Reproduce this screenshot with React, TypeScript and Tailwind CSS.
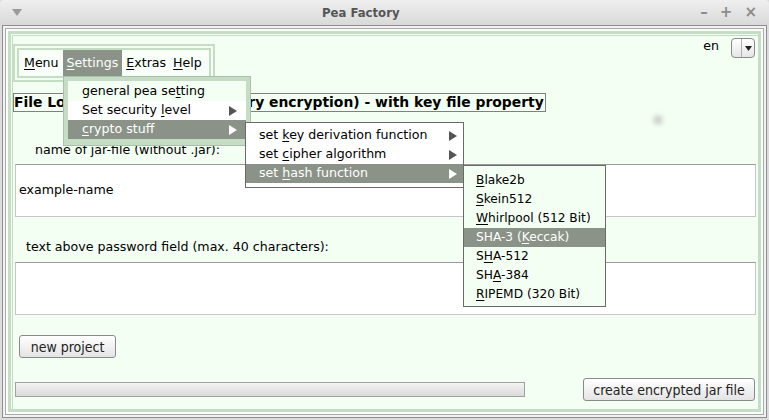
import React from "react";

const GREEN = "border-[#c5dcc5]";

function Mn({ children }: { children: React.ReactNode }) {
  return <span className="underline underline-offset-[2px] decoration-1">{children}</span>;
}

function Arrow({ white }: { white?: boolean }) {
  return (
    <svg width="8" height="10" viewBox="0 0 8 10" className="shrink-0">
      <polygon points="0,0 8,5 0,10" fill={white ? "#ffffff" : "#555555"} />
    </svg>
  );
}

function MenuRow({
  children,
  active,
  arrow,
  className = "",
}: {
  children: React.ReactNode;
  active?: boolean;
  arrow?: boolean;
  className?: string;
}) {
  return (
    <div
      className={`flex items-center justify-between h-[19px] ${
        active ? "bg-[#8b9388] text-white" : "text-black"
      } ${className}`}
    >
      <span>{children}</span>
      {arrow && <Arrow white={active} />}
    </div>
  );
}

export default function App() {
  return (
    <div className="relative w-[769px] h-[420px] bg-[#dcdcdc] flex flex-col font-['DejaVu_Sans',sans-serif] text-[12.6px] text-black overflow-hidden">
      {/* title bar */}
      <div className="h-[25px] shrink-0 flex items-center px-[12px] bg-gradient-to-b from-[#efefef] to-[#d9d9d9] rounded-t-[4px]">
        <svg width="10" height="7" viewBox="0 0 10 7">
          <polygon points="0,0 10,0 5,7" fill="#9a9a9a" />
        </svg>
        <span className="font-['DejaVu_Sans_Condensed','DejaVu_Sans',sans-serif] font-bold text-[13px] text-[#555] ml-[300px]">
          Pea Factory
        </span>
        <div className="ml-auto flex items-center gap-[12px] text-[#8c8c8c] font-bold text-[15px] leading-none">
          <span>–</span>
          <span>+</span>
          <span>×</span>
        </div>
      </div>

      {/* window frame */}
      <div className="flex-1 flex flex-col px-[2px] pb-[2px]">
        <div className="flex-1 flex flex-col border border-[#8e8e8e]">
          <div className="flex-1 flex flex-col p-[2px] bg-[#f2f2f2]">
            <div className="flex-1 flex flex-col border border-[#a9a9a9]">
              <div className="flex-1 flex flex-col p-[2px] bg-[#fafffa]">
                <div className={`flex-1 flex flex-col border-[3px] ${GREEN} bg-[#f3fff3]`}>
                  <div className={`flex-1 flex flex-col border-l border-t ${GREEN} ml-[1px] mt-[1px]`}>
                    {/* top row */}
                    <div className="shrink-0 flex justify-between items-start">
                      <div className="flex flex-col items-start">
                        <div className={`mt-[8px] border-2 ${GREEN} p-[2px] w-[202px]`}>
                          <div className={`border-2 ${GREEN} bg-[#f8fff8] flex h-[30px] pl-[1px]`}>
                            <div className="px-[4px] flex items-center">
                              <span><Mn>M</Mn>enu</span>
                            </div>
                            <div className="px-[4px] flex items-center bg-[#8b9388] text-white">
                              <span><Mn>S</Mn>ettings</span>
                            </div>
                            <div className="px-[4px] flex items-center">
                              <span><Mn>E</Mn>xtras</span>
                            </div>
                            <div className="px-[3px] flex items-center">
                              <span><Mn>H</Mn>elp</span>
                            </div>
                          </div>
                        </div>
                        <div className="mt-[11px] border border-[#808080] h-[19px] w-[533px] flex items-center font-bold text-[13.9px] whitespace-nowrap overflow-hidden">
                          File Lock PEA (file and directory encryption) - with key file property
                        </div>
                      </div>
                      <div className="flex items-center mt-[2px] mr-[3px]">
                        <span className="mr-[12px] -mt-[4px]">en</span>
                        <div className="w-[24px] h-[20px] rounded-[4px] border border-[#8a8a8a] bg-gradient-to-b from-white to-[#e6e6e6] flex">
                          <div className="w-[10px] border-r border-[#b0b0b0]" />
                          <div className="flex-1 flex items-center justify-center">
                            <svg width="7" height="5" viewBox="0 0 7 5">
                              <polygon points="0,0 7,0 3.5,5" fill="#222" />
                            </svg>
                          </div>
                        </div>
                      </div>
                    </div>

                    {/* name label + field */}
                    <div className="shrink-0 mt-[30px] ml-[22px] h-[15px] leading-[15px]">name of jar-file (without .jar):</div>
                    <div className="shrink-0 mt-[7px] mx-[2px] h-[53px] bg-white border border-[#c6c6c6] border-t-[#9a9a9a] flex items-center px-[3px]">
                      example-name
                    </div>

                    {/* password text label + field */}
                    <div className="shrink-0 mt-[22px] ml-[13px] h-[15px] leading-[15px]">
                      text above password field (max. 40 characters):
                    </div>
                    <div className="shrink-0 mt-[8px] mx-[2px] h-[53px] bg-white border border-[#c6c6c6] border-t-[#9a9a9a]" />

                    <div className="shrink-0 mt-[20px] ml-[6px] flex">
                      <button className="w-[97px] h-[23px] rounded-[3px] border border-[#8a8a8a] bg-gradient-to-b from-white to-[#e4e4e4] font-['DejaVu_Sans_Condensed','DejaVu_Sans',sans-serif] text-[14px] text-[#222] leading-none">
                        new project
                      </button>
                    </div>

                    <div className="shrink-0 mt-[20px] flex items-center justify-between">
                      <div className="ml-[2px] w-[510px] h-[15px] border border-[#a0a0a0] bg-gradient-to-b from-[#f4f4f4] to-[#dadada]" />
                      <button className="mr-[3px] w-[172px] h-[23px] rounded-[3px] border border-[#8a8a8a] bg-gradient-to-b from-white to-[#e4e4e4] font-['DejaVu_Sans_Condensed','DejaVu_Sans',sans-serif] text-[14px] text-[#222] leading-none">
                        create encrypted jar file
                      </button>
                    </div>
                  </div>
                </div>
              </div>
            </div>
          </div>
        </div>
      </div>

      {/* faint cursor blob */}
      <div className="absolute left-[653px] top-[115px] w-[10px] h-[10px] rounded-full bg-[#cfd4cf] blur-[2px]" />

      {/* Settings dropdown */}
      <div className="absolute left-[63px] top-[76px] w-[188px] border border-[#aac0aa]">
        <div className={`border-[4px] border-b-[6px] ${GREEN}`}>
          <MenuRow className="h-[20px] bg-[#f3fff3] pl-[14px] pr-[9px]">
            general pea se<Mn>t</Mn>ting
          </MenuRow>
          <MenuRow arrow className="bg-white pl-[14px] pr-[9px]">
            Set security <Mn>l</Mn>evel
          </MenuRow>
          <MenuRow arrow active className="pl-[14px] pr-[9px]">
            <Mn>c</Mn>rypto stuff
          </MenuRow>
        </div>
      </div>

      {/* crypto submenu */}
      <div className="absolute left-[245px] top-[122px] w-[219px] border border-[#6a6a6a] bg-white pt-[3px] pb-[4px]">
        <MenuRow arrow className="pl-[13px] pr-[6px]">
          set <Mn>k</Mn>ey derivation function
        </MenuRow>
        <MenuRow arrow className="pl-[13px] pr-[6px]">
          set <Mn>c</Mn>ipher algorithm
        </MenuRow>
        <MenuRow arrow active className="pl-[13px] pr-[6px]">
          set <Mn>h</Mn>ash function
        </MenuRow>
      </div>

      {/* hash submenu */}
      <div className="absolute left-[463px] top-[165px] w-[143px] border border-[#6a6a6a] bg-[#f3fff3] pt-[5px] pb-[2px] text-[12.2px]">
        <MenuRow className="pl-[12px]"><Mn>B</Mn>lake2b</MenuRow>
        <MenuRow className="pl-[12px]"><Mn>S</Mn>kein512</MenuRow>
        <MenuRow className="pl-[12px]"><Mn>W</Mn>hirlpool (512 Bit)</MenuRow>
        <MenuRow active className="pl-[12px]">SHA-3 (<Mn>K</Mn>eccak)</MenuRow>
        <MenuRow className="pl-[12px]">S<Mn>H</Mn>A-512</MenuRow>
        <MenuRow className="pl-[12px]">SH<Mn>A</Mn>-384</MenuRow>
        <MenuRow className="pl-[12px]"><Mn>R</Mn>IPEMD (320 Bit)</MenuRow>
      </div>
    </div>
  );
}
